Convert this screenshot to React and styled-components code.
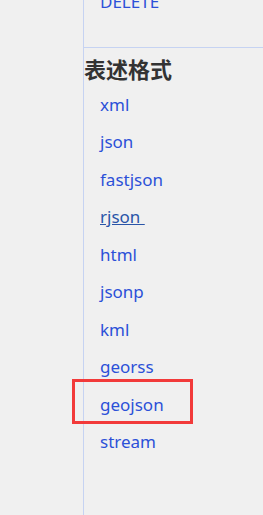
import React from 'react';
import styled, { createGlobalStyle } from 'styled-components';

const GlobalStyle = createGlobalStyle`
    html, body {
        margin: 0;
        padding: 0;
        background-color: #f0f0f0;
        overflow: hidden;
    }
    body {
        font-family: "Noto Sans", "Noto Sans CJK SC", sans-serif;
    }
`;

const Page = styled.div`
    display: flex;
    height: 515px;
`;
const Side = styled.div`
    width: 83px;
    flex-shrink: 0;
`;
const Main = styled.div`
    flex: 1;
    border-left: 1px solid #c6d3f2;
`;
const Section = styled.div`
    padding-bottom: ${({ pb }) => pb || 0}px;
    border-bottom: ${({ line }) => line ? '1px solid #c6d3f2' : 'none'};
    margin-top: ${({ mt }) => mt || 0}px;
`;
const Heading = styled.h3`
    margin: 5px 0 3px 0;
    font-size: 22px;
    line-height: 30px;
    font-weight: 700;
    color: #333;
    font-family: "Noto Sans CJK SC", "Noto Sans", sans-serif;
`;
const List = styled.ul`
    list-style: none;
    margin: 0;
    padding: 0 0 0 16px;
`;
const Item = styled.li`
    position: relative;
    height: 37.5px;
    display: flex;
    align-items: center;
    &::after {
        content: '';
        display: ${({ marked }) => marked ? 'block' : 'none'};
        position: absolute;
        top: -7px;
        left: -28px;
        width: 121px;
        height: 45px;
        box-sizing: border-box;
        border: 3px solid #f23a3a;
    }
`;
const Link = styled.a`
    font-size: 17px;
    color: ${({ visited }) => visited ? '#2a55a8' : '#2c50d8'};
    text-decoration: ${({ visited }) => visited ? 'underline' : 'none'};
    white-space: pre;
`;

const formats = ['xml', 'json', 'fastjson', 'rjson ', 'html', 'jsonp', 'kml', 'georss', 'geojson', 'stream'];

export default function App() {
    return <>
        <GlobalStyle />
        <Page>
            <Side />
            <Main>
                <Section mt={-17} pb={26} line>
                    <List>
                        <Item><Link href="#">DELETE</Link></Item>
                    </List>
                </Section>
                <Section>
                    <Heading>表述格式</Heading>
                    <List>
                        {formats.map((f) => (
                            <Item key={f} marked={f === 'geojson'}>
                                <Link href="#" visited={f === 'rjson '}>{f}</Link>
                            </Item>
                        ))}
                    </List>
                </Section>
            </Main>
        </Page>
    </>;
}
